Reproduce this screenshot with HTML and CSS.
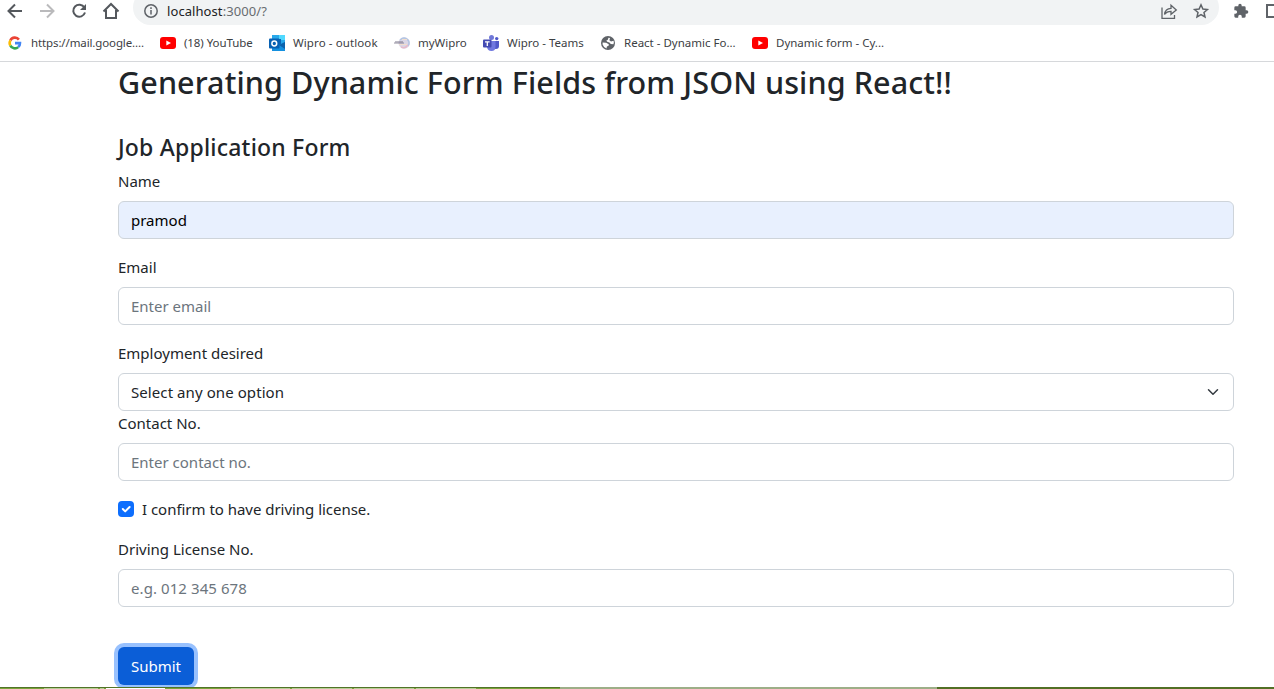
FILE: index.html
```html
<!DOCTYPE html>
<html lang="en">
<head>
<meta charset="utf-8">
<title>Dynamic Form</title>
<link rel="stylesheet" href="styles.css">
</head>
<body>
<div class="window">
<header class="browser">
  <div class="toolbar">
    <svg class="nav" viewBox="0 0 20 20"><path d="M17 10H4M10 3.5 3.5 10l6.500 6.500"/></svg>
    <svg class="nav nav-disabled" viewBox="0 0 20 20"><path d="M3 10h13M10 3.500 16.500 10 10 16.500"/></svg>
    <svg class="nav" viewBox="0 0 20 20"><path d="M15.400 6.600A6 6 0 1 0 16 11.500"/><path class="solid" d="M17 3v6h-6z"/></svg>
    <svg class="nav" viewBox="0 0 20 20"><path d="M2.500 10.500 10 3l7.500 7.500M5 9v8h10V9"/></svg>
    <div class="address">
      <svg class="info" viewBox="0 0 16 16"><circle cx="8" cy="8" r="6.200"/><path d="M8 7v4.500M8 4.300v1.700"/></svg>
      <span class="url">localhost<span class="port">:3000/?</span></span>
      <svg class="action" viewBox="0 0 18 18"><path d="M2 5.500V16.300h12.500V13M4.500 12.500C5 8.500 7.500 6.500 11 6.400V3.200L16.300 8 11 12.300V9.300C8 9.300 6 10.300 4.500 12.500z"/></svg>
      <svg class="action star" viewBox="0 0 18 18"><path d="m9 2.800 1.900 4.200 4.500.5-3.400 3 1 4.500L9 12.700 5 15l1-4.500-3.400-3 4.500-.5z"/></svg>
    </div>
    <svg class="puzzle" viewBox="0 0 24 24"><path d="M20.500 11H19V7a2 2 0 0 0-2-2h-4V3.500a2.500 2.500 0 0 0-5 0V5H4a2 2 0 0 0-2 2v3.800h1.500a2.700 2.700 0 0 1 0 5.400H2V20a2 2 0 0 0 2 2h3.800v-1.500a2.700 2.700 0 0 1 5.400 0V22H17a2 2 0 0 0 2-2v-4h1.500a2.500 2.500 0 0 0 0-5z"/></svg>
    <svg class="panel" viewBox="0 0 8 14"><path d="M9 1H1v12h8"/></svg>
  </div>
  <nav class="bookmarks">
    <a class="bookmark b-mail"><svg class="fav" viewBox="0 0 16 16" fill="none" stroke-width="2.600"><path stroke="#ea4335" d="M3.400 5.400A5 5 0 0 1 11.900 4.600"/><path stroke="#fbbc05" d="M3.400 5.400a5 5 0 0 0 0 5.200"/><path stroke="#34a853" d="M3.400 10.600a5 5 0 0 0 7.800 1.500"/><path stroke="#4285f4" d="M8 8.100h5a5 5 0 0 1-1.800 4"/></svg><span>https://mail.google....</span></a>
    <a class="bookmark b-tube"><svg class="fav" viewBox="0 0 16 16"><rect y="2" width="16" height="12" rx="3" fill="red"/><path d="M6.300 5.400v5.200L11 8z" fill="#fff"/></svg><span>(18) YouTube</span></a>
    <a class="bookmark b-outlook"><svg class="fav" viewBox="0 0 16 16"><path fill="#28a8ea" d="M3 0h13v16H3z"/><path fill="#50d9ff" d="M10 0h6v5h-6z"/><path fill="#0a65b8" d="M4 4h8v6H4z"/><path fill="#1490df" d="M3 10h7l6-3v9H3z"/><path fill="#0b62ac" d="m10 10 6 4V7z"/><rect y="3.500" width="10.500" height="10" rx="1" fill="#0861b3"/><circle cx="5.300" cy="8.500" r="2.400" fill="none" stroke="#fff" stroke-width="1.500"/></svg><span>Wipro - outlook</span></a>
    <a class="bookmark b-wipro"><svg class="fav" viewBox="0 0 16 16"><circle cx="10.200" cy="8" r="5.700" fill="#dad6e6"/><path d="M6 5q4-4 8 0M14 5q2 3 0 6" fill="none" stroke="#b2c5e3" stroke-width="1.500"/><path d="M7 12q4 2 7-2" fill="none" stroke="#e5bacb" stroke-width="1.500"/><path d="M0 8h10M1 6.900h8" stroke="#777287" stroke-width=".8"/><path d="M5 9.500h8M8 4.500h5" stroke="#f0ddce"/></svg><span>myWipro</span></a>
    <a class="bookmark b-teams"><svg class="fav" viewBox="0 0 16 16"><path fill="#5059c9" d="M10 6h6v5q0 3-3 3h-3z"/><path fill="#7078df" d="M4 6h8.500v6q0 4-4 4T4 12z"/><circle cx="8.500" cy="2.600" r="2.500" fill="#7078d8"/><circle cx="13.700" cy="3.600" r="1.700" fill="#5059c9"/><rect y="4.500" width="8.500" height="8" rx="1" fill="#444bb3"/><path d="M2 6.800h4.600M4.300 6.800V11" stroke="#fff" stroke-width="1.300"/></svg><span>Wipro - Teams</span></a>
    <a class="bookmark b-react"><svg class="fav" viewBox="0 0 16 16"><circle cx="8" cy="8" r="7" fill="#5f6368"/><path fill="#fff" d="M8.500 2.700 10 3 9.400 5.200l1.600 1.300 2.600-.8q.6 2-.2 3.600l-2.600-.4-1.400-1.500-2.200-.6-.9-1.300L7.700 5zM2.600 7.500l3.600.3 2.600 1.400-.2 1.600-1.700.7-.4 1.900q-3-1.200-3.900-4z"/></svg><span>React - Dynamic Fo...</span></a>
    <a class="bookmark b-form"><svg class="fav" viewBox="0 0 16 16"><rect y="2" width="16" height="12" rx="3" fill="red"/><path d="M6.300 5.400v5.200L11 8z" fill="#fff"/></svg><span>Dynamic form - Cy...</span></a>
  </nav>
</header>
<main class="page">
  <h1 class="title">Generating Dynamic Form Fields from JSON using React!!</h1>
  <form class="form">
    <h2 class="subtitle">Job Application Form</h2>
    <div class="field"><label class="label">Name</label><div class="control filled">pramod</div></div>
    <div class="field"><label class="label">Email</label><div class="control placeholder">Enter email</div></div>
    <div class="field tight"><label class="label">Employment desired</label><div class="control select"><span>Select any one option</span><svg class="chevron" viewBox="0 0 16 16"><path d="m2 5 6 6 6-6"/></svg></div></div>
    <div class="field"><label class="label">Contact No.</label><div class="control placeholder">Enter contact no.</div></div>
    <div class="check"><svg class="checkbox" viewBox="0 0 16 16"><rect width="16" height="16" rx="4"/><path d="m4.800 8 2.400 2.400 4.400-4.400"/></svg><span>I confirm to have driving license.</span></div>
    <div class="field"><label class="label">Driving License No.</label><div class="control placeholder number">e.g. 012 345 678</div></div>
    <button class="submit" type="button">Submit</button>
  </form>
</main>
<footer class="taskbar"><i class="tab t1"></i><i class="tab t2"></i><i class="tab t3"></i><i class="tab t4"></i><i class="tab"></i><i class="tab"></i><i class="tab t7"></i><i class="pale"></i><i class="dark"></i></footer>
</div>
</body>
</html>
```
FILE: styles.css
```css
* { box-sizing: border-box; }
body { margin: 0; background: #fff; color: #212529; font: 15px/24px "Noto Sans", "Open Sans", sans-serif; }
.window { display: flex; flex-direction: column; height: 689px; overflow: hidden; }
.browser { height: 62px; flex: none; border-bottom: 1px solid #d6d8db; }
.toolbar { display: flex; height: 25px; padding-left: 5px; }
.nav { width: 20px; height: 20px; margin: 1px 12px 0 0; fill: none; stroke: #54585d; stroke-width: 2; }
.nav .solid { fill: #54585d; stroke: none; }
.nav-disabled { stroke: #bababc; }
.address { display: flex; width: 1086px; height: 35px; margin-top: -10px; padding: 10px 9px 0 10px; background: #f1f3f4; border-radius: 18px; }
.info { width: 16px; height: 16px; margin-top: 3px; fill: none; stroke: #5f6368; stroke-width: 1.5; }
.url { margin-left: 8px; font-size: 13px; line-height: 22px; letter-spacing: .08px; color: #202124; margin-right: auto; }
.port { color: #686c70; }
.action { width: 18px; height: 18px; margin-top: 2px; fill: none; stroke: #5f6368; stroke-width: 1.300; }
.star { margin-left: 14px; stroke-width: 1.500; }
.puzzle { width: 16px; height: 16px; margin: 3px 0 0 14px; fill: #5f6368; }
.panel { width: 8px; height: 14px; margin: 4px 0 0 17px; fill: none; stroke: #5f6368; stroke-width: 2; }
.bookmarks { display: flex; height: 36px; padding-left: 7px; align-items: center; font-size: 11.5px; line-height: 16px; color: #3c4043; }
.bookmark { display: flex; flex: none; align-items: center; gap: 8px; white-space: nowrap; }
.fav { width: 16px; height: 16px; flex: none; }
.b-mail { width: 153px; letter-spacing: -.12px; }
.b-tube { width: 109px; letter-spacing: -.08px; }
.b-outlook { width: 125px; letter-spacing: .1px; }
.b-wipro { width: 89px; }
.b-teams { width: 117px; }
.b-react { width: 152px; }
.page { height: 625px; padding: 0 40px 0 118px; }
.title { margin: 0; padding-top: 1px; font-size: 30.5px; font-weight: 500; line-height: 38px; letter-spacing: .1px; white-space: nowrap; }
.subtitle { margin: 32px 0 7px; font-size: 23px; font-weight: 500; line-height: 29px; letter-spacing: .2px; }
.field { margin-bottom: 16px; }
.tight { margin-bottom: 0; }
.label { display: block; width: max-content; height: 24px; margin-bottom: 8px; }
.control { display: flex; justify-content: space-between; height: 38px; padding: 6px 12px; border: 1px solid #ced4da; border-radius: 6px; }
.filled { background: #e8f0fe; color: #000; }
.placeholder { color: #6c757d; }
.select, .number { letter-spacing: .08px; }
.chevron { width: 16px; height: 12px; margin-top: 6px; fill: none; stroke: #343a40; stroke-width: 2; stroke-linecap: round; stroke-linejoin: round; }
.check { display: flex; height: 24px; margin-bottom: 16px; gap: 8px; letter-spacing: -.03px; }
.checkbox { width: 16px; height: 16px; margin-top: 4px; fill: #0d6efd; }
.checkbox path { fill: none; stroke: #fff; stroke-width: 2; stroke-linecap: round; stroke-linejoin: round; }
.submit { display: block; width: 76px; height: 38px; margin-top: 40px; padding: 0; border: 0; border-radius: 6px; background: #0b5ed7; box-shadow: 0 0 0 4px #98c1fe; color: #fff; font: 15px/24px "Noto Sans", sans-serif; }
.taskbar { display: flex; position: relative; height: 2px; flex: none; background: #7aa43b; border-top: 1px solid #527327; }
.tab { width: 60px; height: 1px; margin-right: 2px; background: #b7cf98; flex: none; }
.t1 { width: 54px; margin-left: 44px; }
.t2 { width: 4px; }
.t3 { width: 59px; margin-right: 66px; background: #fff; }
.t4 { width: 59px; }
.t7 { margin-right: 22px; }
.pale { width: 377px; height: 2px; margin-top: -1px; margin-left: 62px; background: #9dae88; flex: none; }
.dark { flex: 1; height: 2px; margin-top: -1px; background: #526f25; }
```
